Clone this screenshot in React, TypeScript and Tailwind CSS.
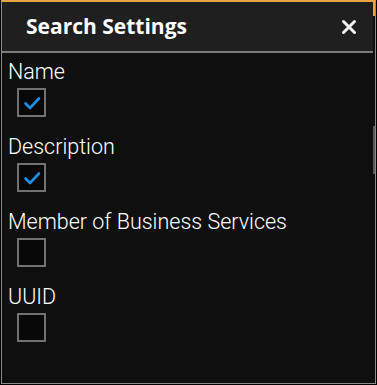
import React from "react";

type Field = { label: string; checked: boolean };

const fields: Field[] = [
  { label: "Name", checked: true },
  { label: "Description", checked: true },
  { label: "Member of Business Services", checked: false },
  { label: "UUID", checked: false },
];

const CheckBox = ({ checked }: { checked: boolean }) => (
  <div className="w-[29px] h-[29px] border-2 border-[#727272] bg-[#080808] flex items-center justify-center">
    {checked && (
      <svg width="20" height="20" viewBox="0 0 20 20" fill="none">
        <path
          d="M3.5 10.5l4.5 4.5L17 5.5"
          stroke="#1e8fe8"
          strokeWidth="2.6"
          strokeLinecap="round"
          strokeLinejoin="round"
        />
      </svg>
    )}
  </div>
);

export default function App() {
  return (
    <div className="w-[377px] h-[385px] bg-black">
      <div className="ml-px w-[375px] h-[384px] flex border-l border-b border-r border-[#8a8a8a] border-t-2 border-t-[#e8a540] bg-[#0f0f0f]">
        <div className="flex-1 flex flex-col min-w-0">
          {/* header */}
          <div className="h-[51px] shrink-0 bg-[#1f1f1f] border-b-2 border-[#7a7a7a] flex items-center justify-between pl-[24px] pr-[16px]">
            <h1
              className="text-[21px] font-bold text-white leading-none"
              style={{ fontFamily: '"Open Sans", "Noto Sans", sans-serif' }}
            >
              Search Settings
            </h1>
            <svg width="16" height="16" viewBox="0 0 16 16">
              <path
                d="M2.5 2.5l11 11M13.5 2.5l-11 11"
                stroke="#f2f2f2"
                strokeWidth="3"
                strokeLinecap="round"
              />
            </svg>
          </div>

          {/* body */}
          <div
            className="flex flex-col pt-[5px] pl-[6px]"
            style={{ fontFamily: "Roboto, 'Liberation Sans', sans-serif" }}
          >
            {fields.map((f) => (
              <div key={f.label} className="flex flex-col h-[75px]">
                <span className="text-[21.5px] font-light leading-[27px] text-white">
                  {f.label}
                </span>
                <div className="mt-[3px] ml-[9px]">
                  <CheckBox checked={f.checked} />
                </div>
              </div>
            ))}
          </div>
        </div>

        {/* scroll track */}
        <div className="w-[2px] shrink-0 flex flex-col">
          <div className="h-[14px] bg-[#e8a540]" />
          <div className="h-[110px]" />
          <div className="h-[48px] bg-[#5a5a5a]" />
        </div>
      </div>
    </div>
  );
}
